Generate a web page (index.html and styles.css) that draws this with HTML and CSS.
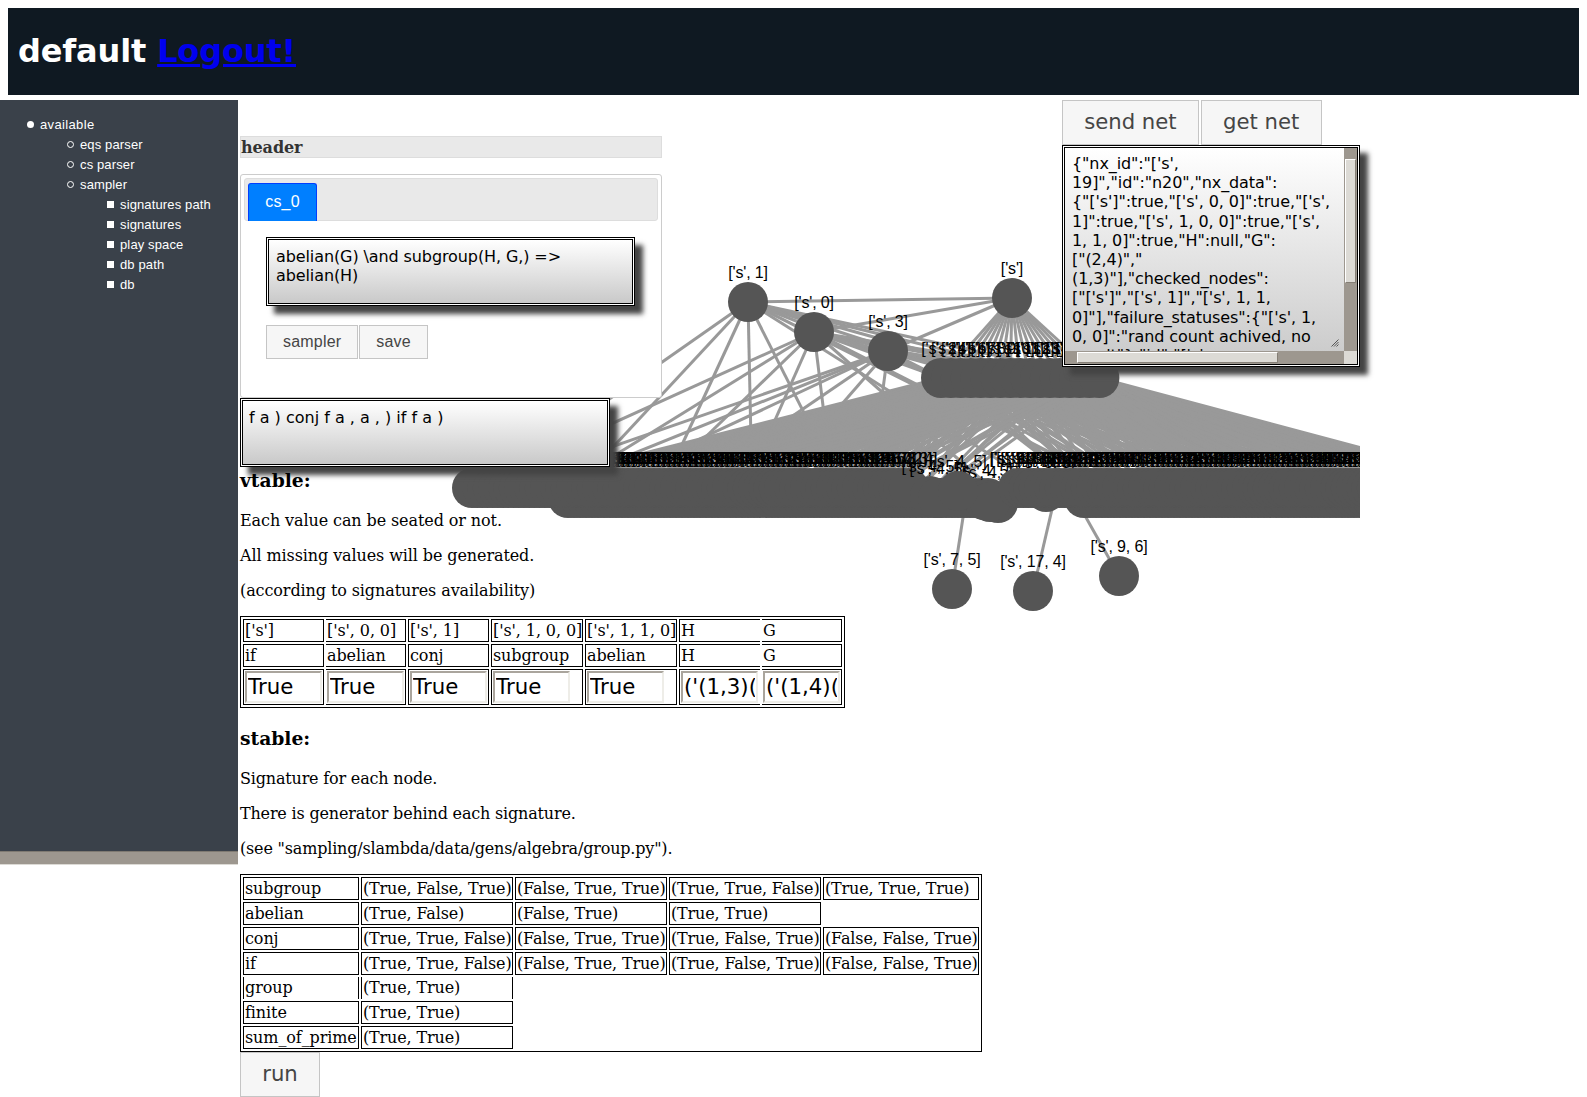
FILE: index.html
```
<!DOCTYPE html>
<html lang="en">
<head>
<meta charset="utf-8">
<title>default</title>
<link rel="stylesheet" href="styles.css">
</head>
<body>
<header class="top"><h1>default <a href="#">Logout!</a></h1></header>
<div class="workspace">
  <svg class="graph" id="graph" width="1360" height="560" viewBox="0 100 1360 560"></svg>
  <nav class="side">
    <ul>
      <li><span class="wide-text">available</span>
        <ul>
          <li>eqs parser</li>
          <li>cs parser</li>
          <li>sampler
            <ul>
              <li>signatures path</li>
              <li>signatures</li>
              <li>play space</li>
              <li>db path</li>
              <li>db</li>
            </ul>
          </li>
        </ul>
      </li>
    </ul>
    <div class="side-scroll"></div>
  </nav>
  <main class="content">
    <div class="bar">header</div>
    <section class="tabs">
      <div class="tab-nav"><a class="tab">cs_0</a></div>
      <div class="tab-body">
        <div class="box">abelian(G) \and subgroup(H, G,) =&gt;<br>abelian(H)</div>
        <div class="buttons"><button class="btn">sampler</button><button class="btn">save</button></div>
      </div>
    </section>
    <div class="box wide">f a ) conj f a , a , ) if f a )</div>
    <h3 class="first">vtable:</h3>
    <p>Each value can be seated or not.</p>
    <p>All missing values will be generated.</p>
    <p>(according to signatures availability)</p>
    <table class="vtable">
      <colgroup><col class="c81"><col class="c80"><col class="c81"><col class="c92"><col class="c92"><col class="c81"><col class="c80"></colgroup>
      <tr><td>['s']</td><td class="nl">['s', 0, 0]</td><td>['s', 1]</td><td>['s', 1, 0, 0]</td><td>['s', 1, 1, 0]</td><td class="nr">H</td><td class="nl">G</td></tr>
      <tr><td>if</td><td class="nl">abelian</td><td>conj</td><td>subgroup</td><td>abelian</td><td class="nr">H</td><td class="nl">G</td></tr>
      <tr class="inputs"><td><input value="True"></td><td class="nl"><input value="True"></td><td><input value="True"></td><td><input value="True"></td><td><input value="True"></td><td class="nr"><input value="('(1,3)("></td><td class="nl"><input value="('(1,4)("></td></tr>
    </table>
    <h3>stable:</h3>
    <div class="notes">
      <p>Signature for each node.</p>
      <p>There is generator behind each signature.</p>
      <p>(see "sampling/slambda/data/gens/algebra/group.py").</p>
    </div>
    <table class="stable">
      <colgroup><col class="c116"><col class="c152"><col class="c152"><col class="c152"><col class="c156"></colgroup>
      <tr><td>subgroup</td><td>(True, False, True)</td><td>(False, True, True)</td><td>(True, True, False)</td><td>(True, True, True)</td></tr>
      <tr><td>abelian</td><td>(True, False)</td><td>(False, True)</td><td>(True, True)</td></tr>
      <tr><td>conj</td><td>(True, True, False)</td><td>(False, True, True)</td><td>(True, False, True)</td><td>(False, False, True)</td></tr>
      <tr><td>if</td><td>(True, True, False)</td><td>(False, True, True)</td><td>(True, False, True)</td><td>(False, False, True)</td></tr>
      <tr class="open"><td>group</td><td>(True, True)</td></tr>
      <tr><td>finite</td><td>(True, True)</td></tr>
      <tr><td>sum_of_prime</td><td>(True, True)</td></tr>
    </table>
    <button class="btn big">run</button>
  </main>
  <aside class="net">
    <div class="net-buttons"><button class="btn big">send net</button><button class="btn big">get net</button></div>
    <div class="net-box">
      <div class="net-text">{"nx_id":"['s',
19]","id":"n20","nx_data":
{"['s']":true,"['s', 0, 0]":true,"['s',
1]":true,"['s', 1, 0, 0]":true,"['s',
1, 1, 0]":true,"H":null,"G":
["(2,4)","
(1,3)"],"checked_nodes":
["['s']","['s', 1]","['s', 1, 1,
0]"],"failure_statuses":{"['s', 1,
0, 0]":"rand count achived, no
result"},"id":"['s',<svg class="grip" width="8" height="8" viewBox="0 0 8 8"><path d="M0.5 7.5L7.5 0.5M3 7.5L7.5 3M5.5 7.5L7.5 5.5" stroke="#555" fill="none"/></svg></div>
      <div class="vscroll"><i></i></div>
      <div class="hscroll"><i></i></div>
      <div class="corner"></div>
    </div>
  </aside>
</div>
<script src="graph.js"></script>
</body>
</html>
```
FILE: styles.css
```
body {
  margin: 0;
  padding: 8px 0 0;
  background: #fff;
  color: #000;
  font: 16px/19px "DejaVu Serif", serif;
  letter-spacing: -0.1px;
  overflow: hidden;
}
.top {
  height: 87px;
  margin: 0 8px 5px;
  padding: 0 10px 2px;
  box-sizing: border-box;
  background: #0f1922;
  display: flex;
  align-items: center;
}
.top h1 {
  margin: 0;
  color: #fff;
  font: bold 32px/38px "DejaVu Sans", sans-serif;
  letter-spacing: -0.15px;
}
.top a { color: #0000ee; }
.workspace {
  position: relative;
  display: flex;
  align-items: flex-start;
  height: 997px;
}
.graph {
  position: absolute;
  left: 0;
  top: 0;
  font: 16px "Liberation Sans", sans-serif;
  letter-spacing: -0.15px;
}
.side, .content, .net { position: relative; }
.side {
  width: 238px;
  height: 765px;
  flex: none;
  background: #3a414a;
  color: #fff;
  font: 13px/20px "Liberation Sans", sans-serif;
  letter-spacing: 0.13px;
  display: flex;
  flex-direction: column;
  justify-content: space-between;
}
.side ul { margin: 0; padding-left: 40px; list-style: none; }
.side > ul { padding-top: 15px; }
.side li::before {
  content: "";
  float: left;
  box-sizing: border-box;
  width: 7px;
  height: 7px;
  margin: 6px 0 0 -13px;
  background: #fff;
  border-radius: 50%;
}
.side li li::before { background: none; border: 1px solid #fff; }
.side li li li::before { background: #fff; border-radius: 0; }
.wide-text { letter-spacing: 0.35px; }
.side-scroll {
  height: 12px;
  background: #9d978f;
  border-top: 1px solid #7f7a72;
  border-bottom: 1px solid #dcdad5;
}
.content {
  width: 822px;
  flex: none;
  margin-left: 2px;
  padding-top: 36px;
  box-sizing: border-box;
}
.bar {
  width: 422px;
  height: 22px;
  box-sizing: border-box;
  border: 1px solid #ddd;
  background: #e9e9e9;
  color: #333;
  font-weight: bold;
  line-height: 21px;
}
.tabs {
  width: 422px;
  height: 224px;
  margin-top: 16px;
  box-sizing: border-box;
  padding: 3px;
  border: 1px solid #ccc;
  border-radius: 3px;
  background: #fff;
}
.tab-nav {
  height: 43px;
  box-sizing: border-box;
  padding: 4px 3px 0;
  border: 1px solid #ddd;
  border-radius: 3px;
  background: #e9e9e9;
}
.tab {
  display: block;
  width: 69px;
  height: 38px;
  box-sizing: border-box;
  border: 1px solid #003eff;
  border-bottom: 0;
  border-radius: 3px 3px 0 0;
  background: #007fff;
  color: #fff;
  font: 16px/36px "Liberation Sans", sans-serif;
  letter-spacing: 0.2px;
  text-align: center;
}
.tab-body { padding: 16px 0 0 22px; }
.box {
  width: 369px;
  height: 69px;
  box-sizing: border-box;
  border: 3px double #000;
  padding: 7px;
  background: linear-gradient(#fff, #c9c9c9) padding-box, #fff;
  box-shadow: 8px 8px 5px #444;
  font: 16px/19px "DejaVu Sans", sans-serif;
}
.wide { width: 370px; padding-left: 6px; letter-spacing: 0; }
.buttons { display: flex; gap: 1px; margin-top: 19px; }
.btn {
  display: block;
  margin: 0;
  padding: 0 16px;
  height: 34px;
  border: 1px solid #c5c5c5;
  background: #f6f6f6;
  color: #454545;
  font: 16px/32px "Liberation Sans", sans-serif;
  letter-spacing: 0.2px;
}
.big {
  height: 45px;
  padding: 0 21.2px 2px;
  font: 21.2px/41px "DejaVu Sans", sans-serif;
  letter-spacing: 0;
}
h3 {
  margin: 19px 0 20px;
  font-size: 18.72px;
  line-height: 22px;
  letter-spacing: 0;
}
h3.first { margin-top: 2px; }
p { margin: 0 0 16px; }
.notes { letter-spacing: -0.18px; }
table {
  border: 1px solid #000;
  border-spacing: 2px;
  table-layout: fixed;
}
.vtable { width: 605px; }
.stable { width: 742px; }
td {
  height: 23px;
  box-sizing: border-box;
  border: 1px solid #000;
  padding: 0 1px;
  white-space: nowrap;
}
.stable td + td { letter-spacing: -0.15px; }
.c80 { width: 80px; }
.c81 { width: 81px; }
.c92 { width: 92px; }
.c116 { width: 116px; }
.c152 { width: 152px; }
.c156 { width: 156px; }
.nl { border-left: 0; }
.nr { border-right: 0; }
.inputs td { height: 36px; }
.open td { height: 22px; border-top: 0; border-bottom: 0; padding-bottom: 2px; }
input {
  display: block;
  width: 77px;
  height: 32px;
  box-sizing: border-box;
  padding: 0 1px 2px;
  border: 2px solid;
  border-color: #aaa59d #eeede8 #eeede8 #aaa59d;
  background: #fff;
  font: 21.3px "DejaVu Sans", sans-serif;
}
.net { width: 298px; flex: none; }
.net-buttons { display: flex; gap: 2px; }
.net-box {
  width: 298px;
  height: 222px;
  box-sizing: border-box;
  border: 3px double #000;
  display: grid;
  grid-template: 203px 13px / 279px 13px;
  background: linear-gradient(#fff, #c9c9c9) padding-box, #fff;
  box-shadow: 8px 8px 5px #444;
}
.net-text {
  position: relative;
  overflow: hidden;
  padding: 6px 7px;
  box-sizing: border-box;
  white-space: pre;
  font: 16px/19.2px "DejaVu Sans", sans-serif;
}
.grip { position: absolute; right: 5px; bottom: 4px; }
.vscroll, .hscroll { background: #9d978f; }
.vscroll { padding: 11px 1px 0; }
.hscroll { grid-row: 2; padding: 1px 0 0 12px; }
.vscroll i, .hscroll i {
  display: block;
  box-sizing: border-box;
  background: #dcdad5;
  border: 1px solid;
  border-color: #fff #857f76 #857f76 #fff;
}
.vscroll i { height: 124px; }
.hscroll i { width: 201px; height: 11px; }
.corner { background: #dcdad5; }
```
FILE: graph.js
```
const svg = document.getElementById('graph');
const NS = 'http://www.w3.org/2000/svg';
let seed = 7;
const rnd = () => (seed = (seed * 16807) % 2147483647) / 2147483647;

function edge(x1, y1, x2, y2) {
  const l = document.createElementNS(NS, 'line');
  l.setAttribute('x1', x1); l.setAttribute('y1', y1);
  l.setAttribute('x2', x2); l.setAttribute('y2', y2);
  l.setAttribute('stroke', '#999'); l.setAttribute('stroke-width', 3);
  svg.appendChild(l);
}
function node(x, y, label) {
  const c = document.createElementNS(NS, 'circle');
  c.setAttribute('cx', x); c.setAttribute('cy', y); c.setAttribute('r', 20);
  c.setAttribute('fill', '#555');
  svg.appendChild(c);
  if (!label) return;
  const t = document.createElementNS(NS, 'text');
  t.setAttribute('x', x); t.setAttribute('y', y - 23.6);
  t.setAttribute('text-anchor', 'middle');
  t.textContent = label;
  svg.appendChild(t);
}

const root = [1012, 298];
const upper = [
  { at: [748, 302], to: [482, 575, 662, 752, 842, 1043], id: 1 },
  { at: [814, 332], to: [470, 562, 653, 745, 833, 991], id: 0 },
  { at: [888, 351], to: [493, 548, 595, 687, 769, 870], id: 3 }
];
const middle = [];
for (let i = 0; i < 17; i++) middle.push(941 + i * 9.9);

for (const u of upper) {
  edge(...u.at, ...root);
  for (const x of u.to) edge(...u.at, x, 488);
  for (let i = 0; i < 17; i += 4) edge(...u.at, middle[i], 378);
  edge(...u.at, 1120, 488);
}
for (const m of middle) edge(...root, m, 378);
middle.forEach((m, i) => {
  for (let j = 0; j < 8; j++) {
    edge(m, 378, 506 + j * 55 + i * 3 + (j ? rnd() * 14 : 0), 488);
    edge(m, 378, 1512 - j * 54 - (16 - i) * 3 - (j ? rnd() * 14 : 0), 488);
  }
});
edge(966, 498, 952, 589);
edge(1056, 492, 1033, 591);
edge(1075, 498, 1119, 576);

middle.forEach((m, i) => node(m, 378, "['s', " + (i ? i + 3 : 2) + "]"));
node(998, 503);
for (let x = 568; x < 990; x += 6) node(x, 498);
for (let x = 1084; x < 1400; x += 6) node(x, 498);
let n = 0;
for (let x = 472; x <= 912; x += 5.2) node(x, 488, "['s', " + (n % 19) + ", " + (n++ % 8) + "]");
for (const [x, y] of [[930, 496], [938, 498], [984, 500], [990, 502], [958, 491]]) node(x, y, "['s', 4, 5]");
node(1046, 492, "['s', 3, 3]");
for (let x = 1018; x < 1400; x += 5.2) node(x, 488, "['s', " + (n % 19) + ", " + (n++ % 8) + "]");

for (const u of upper) node(...u.at, "['s', " + u.id + "]");
node(...root, "['s']");
node(952, 589, "['s', 7, 5]");
node(1033, 591, "['s', 17, 4]");
node(1119, 576, "['s', 9, 6]");
```
